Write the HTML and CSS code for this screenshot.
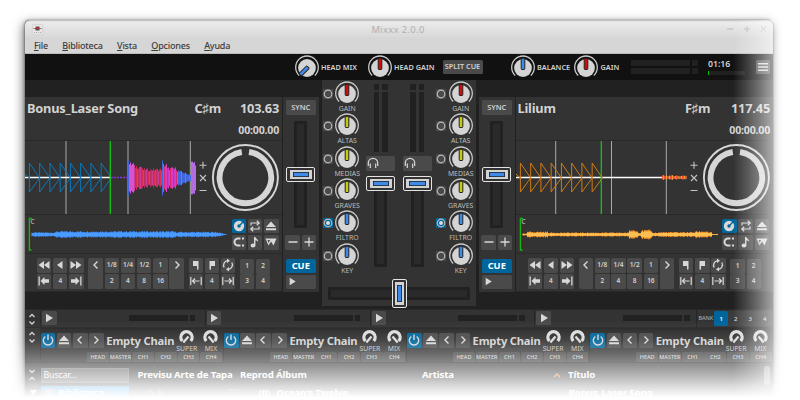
FILE: index.html
```html
<!DOCTYPE html>
<html lang="es">
<head>
<meta charset="utf-8">
<title>Mixxx 2.0.0</title>
<link rel="stylesheet" href="styles.css">
</head>
<body>
<div class="window">
  <header class="titlebar">
    <svg class="appicon" viewBox="0 0 11 11"><rect x=".3" y=".3" width="10.4" height="10.4" rx="1.5" fill="#e8e8e8" stroke="#c4c4c4" stroke-width=".6"/><path d="M1.500 4.500h8" stroke="#777"/><rect x="3.500" y="2.500" width="4" height="4" fill="#555"/><circle cx="5.500" cy="4.300" r="1.300" fill="#c22"/><path d="M2 8.500h7" stroke="#aaa" stroke-dasharray="1 1"/></svg>
    <span class="wtitle">Mixxx 2.0.0</span>
    <svg class="wbtns" viewBox="0 0 42 8"><path d="M1 4h6M18 4h6M21 1v6M35 1l5 6M40 1l-5 6" stroke="#b9b9b9" fill="none"/></svg>
  </header>
  <nav class="menubar"><span><u>F</u>ile</span><span><u>B</u>iblioteca</span><span><u>V</u>ista</span><span><u>O</u>pciones</span><span><u>A</u>yuda</span></nav>
  <div class="toolbar" id="toolbar"></div>
  <main class="decks" id="decks"></main>
  <section class="samplers" id="samplers"></section>
  <section class="effects" id="effects"></section>
  <section class="library">
    <div class="lib-head">
      <div class="collapse"><svg viewBox="0 0 8 14"><path d="M1.500 2l2.500 2.500L6.500 2M1.500 12L4 9.500 6.500 12" class="ln"/></svg></div>
      <div class="search">Buscar...</div>
      <b class="c1">Previsu</b><b class="c2">Arte de Tapa</b><b class="c3">Reprod</b><b class="c4">Álbum</b><b class="c5">Artista</b>
      <svg class="sort" viewBox="0 0 8 5"><path d="M1 4l3-3 3 3" stroke="#f08a3c" stroke-width="1.400" fill="none"/></svg>
      <b class="c6">Título</b><i class="scroll"></i>
    </div>
    <div class="lib-row">
      <svg class="tri" viewBox="0 0 7 6"><path d="M0 0h7l-3.500 6z" fill="#eee"/></svg>
      <div class="side"><i class="sq"></i>Biblioteca</div>
      <svg class="prev" viewBox="0 0 18 9"><path d="M1 8V5a3.500 3.500 0 017 0v3M14 1l4 3-4 3z" stroke="#999" fill="none"/></svg>
      <i class="check"></i><b class="c3b">(0)</b><b class="c4">Ocean's Twelve</b><b class="c7">Bonus_Laser Song</b>
    </div>
  </section>
</div>
<div class="fade-right"></div>
<div class="fade-bottom"></div>
<script src="app.js"></script>
</body>
</html>
```
FILE: styles.css
```css
* { box-sizing: border-box; }
body { margin: 0; width: 800px; height: 400px; overflow: hidden; background: #fff; position: relative;
  font-family: "Noto Sans", sans-serif; font-size: 8px; line-height: 1; color: #d2d2d2; }
svg { display: block; overflow: visible; flex: none; }
.window { margin: 20px 0 0 25px; width: 748px; height: 378px; background: #212121; border-radius: 5px 5px 0 0;
  box-shadow: -2px 3px 11px rgba(0,0,0,.5), -1px 0 3px rgba(0,0,0,.3), 0 0 1px #6a8a6a; }
.titlebar { height: 17px; display: flex; align-items: center; justify-content: space-between; padding: 1px 5px 0 7px;
  border-radius: 5px 5px 0 0; background: linear-gradient(#bbb, #ececec 2px, #e2e2e2 9px, #d9d9d9); }
.appicon { width: 11px; height: 11px; margin-top: 1px; }
.wtitle { font-size: 9.400px; color: #b0b0b0; letter-spacing: .35px; margin-left: 27px; padding-top: 1px; }
.wbtns { width: 42px; height: 8px; }
.menubar { height: 17px; display: flex; padding: 3.500px 0 0 9px; gap: 14.300px; background: #d6d6d6; color: #3c3c3c;
  font-size: 9px; letter-spacing: -.2px; font-weight: 500; border-bottom: 1px solid #bbb; }
.menubar u { text-underline-offset: 1px; }
.toolbar { height: 26px; background: #111; display: flex; align-items: center; padding-left: 269.500px; font-weight: 600; font-size: 7.300px; }
.toolbar > * { flex: none; }
.knob { width: 24px; height: 24px; }
.toolbar .lbl { margin-left: 2.500px; padding-top: 1px; white-space: nowrap; }
.w1 { width: 46.500px; } .w2 { width: 48.500px; } .w3 { width: 37px; } .w4 { width: 30.500px; }
.btn { background: #4a4a4a; border-radius: 1.500px; display: flex; align-items: center; justify-content: center; color: #d2d2d2; font-weight: 600; overflow: hidden; }
.btn.on { background: #00659b; color: #fff; }
.split { width: 40px; height: 14.500px; margin-right: 28px; white-space: nowrap; }
.vu { display: grid; grid-template-columns: 59px 5.500px; grid-template-rows: 6px 6px; gap: 2px; width: 77px; }
.vu i, .sbar i { background: #212121; }
.clock { width: 47.500px; font-size: 8.700px; padding-top: 1px; }
.prog { width: 37px; height: 4px; margin-top: 3px; background: #202020; border-left: 1px solid #0b0; }
.burger { width: 14.500px; height: 14.500px; }
.decks { height: 229px; display: grid; grid-template-columns: 257px 1px 36px 3px 153.500px 3.500px 36px .5px 257.500px; }
.deck, .sync { margin-top: 17px; height: 195px; background: #333; }
.deck { display: grid; grid-template-rows: 44px 74px 39px 38px; overflow: hidden; }
.deck > div { border-bottom: 1px solid #292929; }
.info { display: grid; grid-template-columns: 167.500px 1fr 53px; grid-template-rows: 23px 17px; padding: 0 3px 0 2px; align-items: center;
  font-size: 12.800px; letter-spacing: -.2px; font-weight: 700; white-space: nowrap; }
.info .r { text-align: right; }
.info .t { grid-column: 1 / 4; font-size: 10.600px; text-align: right; padding-top: 3px; }
.wave { display: grid; grid-template-columns: 171px 86px; }
.over { display: grid; grid-template-columns: 206.500px 47px; }
.six { display: grid; grid-template-columns: repeat(3, 14.500px); grid-auto-rows: 14.500px; gap: 1.800px; padding-top: 3.800px; }
.ctl { display: flex; padding: 4px 0 0 12px; gap: 4.800px; font-size: 6.500px; }
.g { display: grid; grid-auto-rows: 14.500px; gap: 1.700px; height: 31px; }
.g3 { grid-template-columns: repeat(3, 14.400px); }
.g2 { grid-template-columns: repeat(2, 14.400px); grid-auto-rows: 15px; padding-top: .5px; row-gap: 0; }
.g6 { grid-template-columns: repeat(6, 14.500px); }
.tall { grid-row: span 2; align-items: flex-start; padding-top: 3px; }
.sync { padding: 3px 3px 0 2.500px; font-size: 7.400px; display: flex; flex-direction: column; align-items: center; }
.sync .wide { width: 30.500px; height: 14.500px; flex: none; }
.sync .cue { font-size: 9.300px; font-weight: 700; margin-top: 9px; height: 14.500px; }
.sync .play { margin-top: 1.700px; justify-content: flex-start; padding-left: 0; }
.pm { display: flex; gap: 2px; margin-top: 7px; }
.pm .btn { width: 14.300px; height: 14.500px; }
.track { background: #2a2a2a; border: 3px solid #212121; outline: 0; border-radius: 1.500px; position: relative; flex: none; }
.track.v { width: 13px; }
.handle { position: absolute; background: #333; border: 1.300px solid #e4e4e4; border-radius: 2px; display: flex; align-items: center; justify-content: center; width: 29px; height: 14.500px; left: -11px; }
.handle i { width: 22.500px; height: 9px; background: #3f8ae8; border: solid #d2d2d2; border-width: 2.300px 3px; outline: 0; box-shadow: inset 0 0 0 .8px #222; }
.handle.h { width: 14.500px; height: 29.500px; left: 61px; top: -11.500px; }
.handle.h i { width: 9px; height: 23px; border-width: 3px 2px; }
.sync .track { height: 107px; margin-top: 6.500px; }
.sync .handle { top: 43px; }
.mixer { background: #333; height: 226px; padding-top: 1px; }
.mixcols { display: grid; grid-template-columns: 44px 36.500px 33px 40px; height: 200px; }
.eq { display: grid; grid-auto-rows: 32.350px; margin-left: -.500px; }
.eqrow { display: grid; grid-template-columns: 10px 24px; column-gap: 2.700px; padding-left: 1px; grid-template-rows: 24px 8px; font-size: 6.900px; }
.eqrow .tog { height: 10px; margin-top: 8px; border-radius: 1px; }
.eqrow .name { grid-column: 2; text-align: center; display: flex; justify-content: center; color: #bdbdbd; white-space: nowrap; padding-top: 1px; }
.fader { display: flex; flex-direction: column; align-items: center; width: 29.500px; }
.vvu { display: grid; grid-template-columns: 5.500px 5.500px; grid-template-rows: 6px 59.500px; gap: 2px 3px; margin-top: 3px; }
.vvu i { background: #212121; }
.fader .btn { width: 29px; height: 14.500px; margin-top: 4.500px; justify-content: flex-start; padding-left: 0; }
.fader .track { margin-top: 9px; height: 87px; }
.fader .handle { top: -6.500px; }
.xf { width: 142px; height: 13px; margin: 6px 0 0 6px; }
.samplers { height: 19px; display: flex; background: #333; border-top: 1px solid #292929; border-bottom: 1px solid #292929; overflow: hidden; }
.collapse { width: 16px; display: flex; justify-content: center; align-items: center; border-right: 1px solid #292929; flex: none; }
.collapse svg { width: 8px; height: 14px; margin-right: 1px; }
.ln { fill: none; stroke: #d2d2d2; stroke-width: 1.300; }
.sampler { width: 164.800px; display: flex; align-items: center; justify-content: space-between; padding: 0 9.500px 1px 1px; border-right: 1.500px solid #252525; flex: none; }
.sampler:nth-of-type(5) { width: 162px; padding-right: 6.500px; }
.sampler .btn { width: 14.500px; height: 14.500px; }
.sbar { display: grid; grid-template-columns: 59px 5.500px; gap: 2px; height: 6px; }
.bank { display: flex; align-items: center; padding-left: 1px; color: #bbb; }
.bank .lb { width: 15.500px; font-size: 5.600px; flex: none; }
.bank .btn { width: 14.500px; height: 14.500px; font-size: 6px; background: #3c3c3c; flex: none; }
.bank .btn.on { background: #00659b; }
.effects { height: 35px; display: flex; background: #333; border-bottom: 1px solid #292929; overflow: hidden; }
.effects .collapse { align-items: flex-start; padding-top: 2px; }
.unit { width: 183.150px; flex: none; border-right: 1px solid #292929; }
.utop { display: flex; height: 22.500px; padding-top: 4px; gap: 1.700px; border-top: 1px solid #262626; background: linear-gradient(#292929, #333 60%); }
.utop .btn { width: 14.400px; height: 14.500px; flex: none; }
.utop .nm { font-size: 11.200px; letter-spacing: -.2px; font-weight: 700; width: 68.500px; margin-left: 1px; padding-top: 1.500px; white-space: nowrap; }
.fx { width: 20.500px; display: flex; flex-direction: column; align-items: center; font-size: 6.800px; line-height: 7px; margin-top: -3.500px; color: #c4c4c4; }
.fx svg { width: 15px; height: 15px; }
.fx.m { margin-left: 2px; }
.uch { display: grid; grid-template-columns: repeat(6, 21.800px); gap: .9px; justify-content: end; height: 11px; padding-right: 1px; margin-top: 1.500px; font-size: 5.500px; }
.uch .btn { background: #464646; font-weight: 500; }
.library { background: #2c2c2c; height: 36px; color: #fff; font-size: 9.600px; letter-spacing: -.1px; font-weight: 600; overflow: hidden; }
.lib-head, .lib-row { display: grid; align-items: center; white-space: nowrap; }
.lib-head { height: 24px; grid-template-columns: 15.500px 97px 36.500px 66px 36px 146px 129px 17px 196px 6px; background: #383838; }
.lib-head b, .lib-row b { font-weight: 700; }
.search { width: 88.500px; height: 15px; background: #666; border: 1px solid #777; font-size: 8.800px; padding: 2px; font-weight: 400; }
.scroll { width: 6px; height: 19px; background: #888; border-radius: 3px; }
.sort { width: 8px; height: 5px; margin-left: 2px; }
.lib-row { height: 14px; grid-template-columns: 15.500px 104px 84px 30px 18px 292px 1fr; }
.lib-row > * { transform: translateY(-1px); }
.tri { width: 7px; height: 6px; margin-left: 5px; }
.side { width: 88.500px; height: 14px; background: #1b8fe6; display: flex; align-items: center; gap: 6px; padding-left: 4px; }
.sq { width: 8px; height: 8px; background: #a99; }
.prev { width: 18px; height: 9px; }
.check { width: 10px; height: 9px; border: 1px solid #777; }
.fade-right { position: absolute; left: 733px; top: 20px; width: 40px; height: 380px;
  background: linear-gradient(90deg, rgba(255,255,255,0), rgba(255,255,255,.18) 35%, rgba(255,255,255,.36) 65%, rgba(255,255,255,.6)); }
.fade-bottom { position: absolute; left: 0; top: 320px; width: 800px; height: 80px;
  background: linear-gradient(rgba(255,255,255,0), rgba(255,255,255,.09) 25%, rgba(255,255,255,.27) 42%, rgba(255,255,255,.48) 58%, rgba(255,255,255,.68) 73%, rgba(255,255,255,.86) 85%, #fff 97%); }
```
FILE: app.js
```js
const knob = (color, angle = 0) => `<svg class="knob" viewBox="0 0 24 24">
  <path d="M4.200 20.500A11.300 11.300 0 1 1 19.800 20.500" fill="none" stroke="#cacaca" stroke-width="1.300"/>
  <circle cx="12" cy="13" r="8.900" fill="#d4d4d4"/>
  <rect x="10.200" y="3.300" width="3.600" height="11.200" rx=".8" fill="${color}" stroke="#222" stroke-width="1" transform="rotate(${angle} 12 13)"/></svg>`;
const icon = (body, size = 14) => `<svg width="${size}" height="${size}" viewBox="0 0 14 14" fill="#d8d8d8">${body}</svg>`;
const btn = (content, cls = '') => `<div class="btn ${cls}">${content}</div>`;
const line = (d, w = 1.4) => icon(`<path d="${d}" fill="none" stroke="#d8d8d8" stroke-width="${w}"/>`);
const fill = d => icon(`<path d="${d}"/>`);
const I = {
  rew: fill('M7 3v8L1.500 7zM12.500 3v8L7 7z'), back: fill('M9.500 3v8L4 7z'), fwd: fill('M1.500 3v8L7 7zM7 3v8l5.500-4z'),
  play: fill('M4 2.800v8.400L11 7z'), lt: line('M8.500 3.500L5 7l3.500 3.500'), gt: line('M5.500 3.500L9 7l-3.500 3.500'),
  jl: fill('M1.500 2.500h1.300v9H1.500zM3.500 7l4-4v2.300H12v3.400H7.500V11z'), jr: fill('M11.200 2.500h1.300v9h-1.300zM10.500 7l-4-4v2.300H2v3.400h4.500V11z'),
  f1: fill('M4 3h5.500v8.500H8V8H4z'), f2: fill('M4.500 3H10v5H6v3.500H4.500z'),
  cyc: icon('<path d="M3.200 9.500A4.600 4.600 0 0 1 6.500 2.600M10.800 4.500A4.600 4.600 0 0 1 7.500 11.400" fill="none" stroke="#d8d8d8" stroke-width="1.300"/><path d="M6 .5l3 2.200-3 2.300zM8 9l-3 2.300L8 13.500z"/>'),
  li: line('M1.800 3v8M12.200 3v8M3.500 7h7M6 4.500L3.500 7 6 9.500', 1.2), lo: line('M1.800 3v8M12.200 3v8M3.500 7h7M8 4.500L10.500 7 8 9.500', 1.2),
  disc: icon('<circle cx="7" cy="7" r="5.200"/><circle cx="7" cy="7" r="1.700" fill="#00659b"/><path d="M8 6l4-4" stroke="#00659b" stroke-width="1.200"/>'),
  rep: line('M3 6.500V4h7.500M3 10h8V7.500M8.800 1.800L11.200 4 8.800 6.200M5.200 7.800L2.800 10l2.400 2.200', 1.2),
  ej: fill('M7 2.500l5 5.500H2zM2 9.300h10v1.900H2z'), mag: line('M8.500 3.500H6a3.500 3.500 0 0 0 0 7h2.500M10 3.500h2M10 10.500h2', 2),
  note: icon('<ellipse cx="5" cy="10.500" rx="2.400" ry="1.900"/><path d="M6 2h1.400c.5 2 3.200 2 2.800 5-.5-1.300-1.500-1.700-2.800-1.800v5H6z"/>'),
  w: fill('M1.500 3.500h11l-3 7-2.500-4-2.500 4zM3.500 5l1.200 3 1.300-3z'),
  pow: line('M4.300 3.500a4.700 4.700 0 1 0 5.400 0M7 1.500v5.500', 1.4), minus: line('M2.500 7h9', 1.3), plus: line('M2.500 7h9M7 2.500v9', 1.3),
  hp: line('M2.300 10V7a4.700 4.700 0 0 1 9.400 0v3M4.300 7.500v4.500M9.700 7.500v4.500', 1.2),
  burger: line('M2 3.700h10M2 7h10M2 10.300h10', 1.6)
};
const RED = '#cc0d0d', YEL = '#c4cc10', BLUE = '#3f8ae8';

document.getElementById('toolbar').innerHTML =
  knob(BLUE, -135) + '<span class="lbl w1">HEAD MIX</span>' +
  knob(RED) + '<span class="lbl w2">HEAD GAIN</span>' + btn('SPLIT CUE', 'split') +
  knob(BLUE) + '<span class="lbl w3">BALANCE</span>' + knob(RED) + '<span class="lbl w4">GAIN</span>' +
  '<div class="vu"><i></i><i></i><i></i><i></i></div><div class="clock">01:16<div class="prog"></div></div>' + btn(I.burger, 'burger');

// Deterministic jitter for the waveforms
const noise = n => { const s = Math.sin(n * 12.9898) * 43758.5453; return s - Math.floor(s); };

function wave(kind) {
  const left = kind === 'L', color = left ? '#0b78bd' : '#d07a12';
  let s = '';
  for (const x of left ? [41, 103, 165.3] : [39.7, 95.5, 150.3]) s += `<path d="M${x} 0V73" stroke="#aaa"/>`;
  let saw = 'M0 33L4.300 37';
  for (let i = 0; i < 8; i++) {
    const x = 4.4 + i * 10.25;
    saw += `M${x} 37V22L${x + 10.25} 37M${x} 37V51L${x + 10.25} 37`;
  }
  s += `<path d="M0 36.500H${left ? 86 : 171}" stroke="#fff" stroke-width="1.300"/><path d="${saw}" stroke="${color}" fill="none"/>`;
  if (left) {
    s += '<path d="M86 36.500H103" stroke="#8a35d8" stroke-dasharray="2 1" stroke-width="1.500"/>';
    for (let x = 103; x < 171; x++) {
      const peak = x >= 166 ? 15.5 : x < 109 ? 14 : x < 117 ? 11.5 : x < 137 ? 8.5 : x < 142 ? 13 : x < 152 ? 9.5 : Math.max(3, 7.5 - (x - 152) * .35);
      const edge = x === 103 || x === 137;
      const h = edge ? 17.5 : Math.max(2, peak * (.8 + noise(x) * .35));
      const c = x >= 166 ? (x % 2 ? '#b469e0' : '#7a88f0') : edge || x > 151 ? (x % 4 ? '#3f68e0' : '#5a80ee') : x < 109 ? '#d653d0' : x < 137 ? ['#dc2d50', '#c93c9c', '#b8305c'][x % 3] : ['#dd3dbc', '#e02870', '#c63ccc'][x % 3];
      s += `<path d="M${x + .5} ${37 - h}V${37 + h}" stroke="${c}"/>`;
    }
  } else {
    for (let x = 146; x < 171; x++) { const h = .8 + noise(x) * 1.6; s += `<path d="M${x + .5} ${36.5 - h}V${36.5 + h}" stroke="${x % 3 ? '#f0542c' : '#f59c30'}"/>`; }
  }
  s += '<path d="M85.300 0V73" stroke="#10c810" stroke-width="1.300"/>';
  return `<svg width="171" height="73" viewBox="0 0 171 73" style="overflow:hidden">${s}</svg>`;
}

function overview(kind) {
  const left = kind === 'L';
  let outer = '', inner = '';
  for (let x = 6; x < 202; x += 1) {
    let h;
    if (left) h = x < 31 ? 2 : x < 150 ? 3 : x < 190 ? 2.4 : 2.6 * (202 - x) / 12;
    else h = x < 11 ? .8 : x < 32 ? 2.6 : x > 195 ? .5 : x > 112 && x < 122 ? 4.2 : x > 124 && x < 136 ? 4 : x > 178 && x < 192 ? 3 : x > 142 ? 2.2 : 1.8;
    h *= .75 + noise(x + (left ? 0 : 500)) * .45;
    outer += `M${x + .5} ${19.5 - h}V${19.5 + h}`;
    inner += `M${x + .5} ${19.5 - h * .7}V${19.5 + h * .7}`;
  }
  return `<svg width="206" height="38" viewBox="0 0 206 38"><path d="${outer}" stroke="${left ? '#3a7fdd' : '#e08020'}"/><path d="${inner}" stroke="${left ? '#4a9bff' : '#ffbe50'}"/>
    <path d="M7 3.500H4.500V35H6.500" stroke="#10b810" stroke-width="1.500" fill="none"/><path d="M6 6V34" stroke="#5a1a1a" stroke-width=".8"/><text x="5.500" y="8.500" font-size="6.500" fill="#ccc">C</text></svg>`;
}

const platter = `<svg width="86" height="73" viewBox="0 0 86 73">
  <path d="M3.500 24.300h7M7 20.800v7M4 34l6 6M10 34l-6 6M3.500 49.500h7" stroke="#c4c4c4" fill="none" stroke-width="1.100"/>
  <circle cx="49.400" cy="36.500" r="32.500" fill="none" stroke="#d6d6d6" stroke-width="1.900"/>
  <path d="M53 11A25.800 25.800 0 1 1 45.800 11" fill="none" stroke="#d6d6d6" stroke-width="6"/></svg>`;

const deck = (kind, title, key, bpm) => `<section class="deck">
  <div class="info"><span>${title}</span><span>${key}</span><span class="r">${bpm}</span><span class="t">00:00.00</span></div>
  <div class="wave">${wave(kind)}${platter}</div>
  <div class="over">${overview(kind)}<div class="six">${btn(I.disc, 'on')}${btn(I.rep)}${btn(I.ej)}${btn(I.mag)}${btn(I.note)}${btn(I.w)}</div></div>
  <div class="ctl">
    <div class="g g3">${[I.rew, I.back, I.fwd, I.jl, '4', I.jr].map(x => btn(x)).join('')}</div>
    <div class="g g6">${btn(line('M8.500 .5L5 4l3.500 3.500'), 'tall')}${['1/8', '1/4', '1/2', '1'].map(x => btn(x)).join('')}${btn(line('M5.500 .5L9 4 5.500 7.500'), 'tall')}${['2', '4', '8', '16'].map(x => btn(x)).join('')}</div>
    <div class="g g3">${[I.f1, I.f2, I.cyc, I.li, '4', I.lo].map(x => btn(x)).join('')}</div>
    <div class="g g2">${['1', '2', '3', '4'].map(x => btn(x)).join('')}</div>
  </div></section>`;

const handle = '<div class="handle"><i></i></div>';
const sync = `<section class="sync">${btn('SYNC', 'wide')}<div class="track v">${handle}</div>
  <div class="pm">${btn(I.minus)}${btn(I.plus)}</div>${btn('CUE', 'wide on cue')}${btn(icon('<path d="M4 3v8l6.500-4z"/>', 13), 'wide play')}</section>`;

const eq = () => '<div class="eq">' + [['GAIN', RED], ['ALTAS', YEL], ['MEDIAS', YEL], ['GRAVES', YEL], ['FILTRO', BLUE], ['KEY', BLUE]].map(([n, c]) =>
  `<div class="eqrow">${btn(`<svg width="10" height="10" viewBox="0 0 10 10"><circle cx="5" cy="5" r="3.800" fill="none" stroke="#bbb" stroke-width="1.200"/>${n === 'FILTRO' ? '<circle cx="5" cy="5" r="2" fill="#ddd"/>' : ''}</svg>`, 'tog' + (n === 'FILTRO' ? ' on' : ''))}${knob(c)}<span class="name">${n}</span></div>`).join('') + '</div>';
const fader = `<div class="fader"><div class="vvu"><i></i><i></i><i></i><i></i></div>${btn(I.hp)}<div class="track v">${handle}</div></div>`;
const mixer = `<section class="mixer"><div class="mixcols">${eq()}${fader}${fader}${eq()}</div><div class="track xf"><div class="handle h"><i></i></div></div></section>`;

document.getElementById('decks').innerHTML = deck('L', 'Bonus_Laser Song', 'C♯m', '103.63') + '<span></span>' + sync + '<span></span>' +
  mixer + '<span></span>' + sync + '<span></span>' + deck('R', 'Lilium', 'F♯m', '117.45');

const collapse = '<div class="collapse"><svg viewBox="0 0 8 14"><path d="M1.500 5L4 2.500 6.500 5M1.500 9.500L4 12l2.500-2.500" class="ln"/></svg></div>';
document.getElementById('samplers').innerHTML = collapse + `<div class="sampler">${btn(I.play)}<div class="sbar"><i></i><i></i></div></div>`.repeat(4) +
  `<div class="bank"><span class="lb">BANK</span>${btn('1', 'on')}${btn('2')}${btn('3')}${btn('4')}</div>`;

const fx = (flip, name, cls) => `<div class="fx ${cls}"><svg viewBox="0 0 15 15"><g ${flip ? 'transform="translate(15 0) scale(-1 1)"' : ''}><path d="M3.300 11A5.600 5.600 0 1 1 11.700 11" fill="none" stroke="#dcdcdc" stroke-width="3.300"/><path d="M4.300 12.500L9.500 6.500" stroke="#dcdcdc" stroke-width="2.300"/></g></svg><span>${name}</span></div>`;
const unit = `<div class="unit"><div class="utop">${btn(I.pow, 'on')}${btn(I.ej)}${btn(I.lt)}${btn(I.gt)}<span class="nm">Empty Chain</span>${fx(false, 'SUPER', '')}${fx(true, 'MIX', 'm')}</div>
  <div class="uch">${['HEAD', 'MASTER', 'CH1', 'CH2', 'CH3', 'CH4'].map(x => btn(x)).join('')}</div></div>`;
document.getElementById('effects').innerHTML = collapse + unit.repeat(4);
```
